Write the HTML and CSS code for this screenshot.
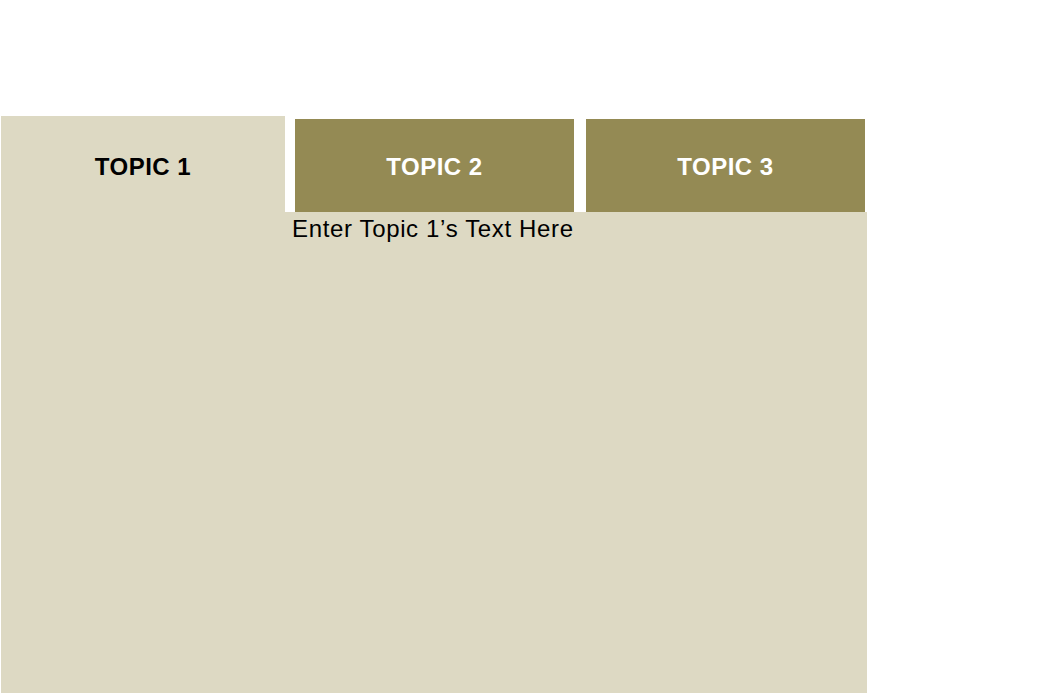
FILE: index.html
```html
<!DOCTYPE html>
<html lang="en">
<head>
  <meta charset="UTF-8">
  <meta name="viewport" content="width=device-width, initial-scale=1.0">

  <title>Topics</title>

  <link rel="stylesheet" href="styles.css">
</head>
<body>

  <div id="Topicos" class="Topicos">
    <div id="TopicosAbas" class="TopicosAbas">
      <div id="aba1" class="TopicosAba TopicosAba-ativa">TOPIC 1</div>
      <div id="aba2" class="TopicosAba">TOPIC 2</div>
      <div id="aba3" class="TopicosAba">TOPIC 3</div>
    </div>

    <div id="TopicosConteudo" class="TopicosConteudo">
      <p class="TopicosTexto">Enter Topic 1’s Text Here</p>
    </div> <!-- Fim TopicosConteudo -->
  </div>

</body>
</html>
```

FILE: styles.css
```css
html, body {
  margin: 0;
  padding: 0;
  background-color: #fff;
  font-family: "Liberation Sans", Arial, sans-serif;
}
.Topicos {
  width: 866px;
  margin-left: 1px;
  padding-top: 116px;
}
.TopicosAbas {
  display: flex;
  align-items: flex-end;
}
.TopicosAba {
  display: flex;
  align-items: center;
  justify-content: center;
  box-sizing: border-box;
  width: 279px;
  height: 93px;
  padding-top: 2px;
  margin-left: 12px;
  background-color: #948a54;
  color: #fff;
  font-size: 24px;
  font-weight: bold;
  letter-spacing: 0.5px;
}
#aba2 {
  margin-left: 10px;
}
.TopicosAba-ativa {
  width: 284px;
  height: 96px;
  padding-top: 5px;
  margin-left: 0;
  background-color: #ddd9c3;
  color: #000;
}
.TopicosConteudo {
  height: 480px;
  background-color: #ddd9c3;
  padding: 3px 0 0 291px;
}
.TopicosTexto {
  margin: 0;
  font-size: 24px;
  letter-spacing: 0.65px;
}
```
